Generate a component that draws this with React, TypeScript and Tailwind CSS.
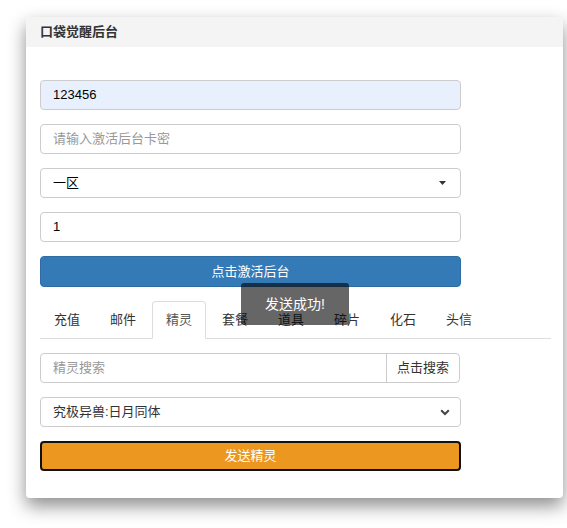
const tabs = ["充值", "邮件", "精灵", "套餐", "道具", "碎片", "化石", "头信"];

const field = "h-[30px] w-[421px] rounded-[4px] border border-[#ccc] px-[12px] flex items-center text-[13px]";

export default function App() {
  return (
    <div
      className="relative min-h-[528px] bg-white pt-[17px] pl-[26px] text-[#333]"
      style={{ fontFamily: '"Liberation Sans", "Noto Sans CJK SC", sans-serif' }}
    >
      <div className="w-[537px] overflow-hidden rounded-[4px] bg-white shadow-[0_8px_18px_rgba(0,0,0,0.45)]">
        {/* Header */}
        <div className="flex h-[30px] items-center bg-[#f4f4f4] px-[14px] text-[13px] font-bold text-[#333]">
          口袋觉醒后台
        </div>

        <div className="pl-[14px] pr-[12px] pt-[33px] pb-[27px]">
          {/* Activation form */}
          <div className="flex flex-col gap-[14px]">
            <div className={`${field} bg-[#e8f0fe] text-[#000]`}>123456</div>
            <div className={`${field} bg-white text-[#999]`}>请输入激活后台卡密</div>
            <div className={`${field} justify-between bg-white text-[#000]`}>
              <span>一区</span>
              <svg width="7" height="4" viewBox="0 0 7 4" className="mr-[2px]">
                <path d="M0 0h7L3.5 4z" fill="#333" />
              </svg>
            </div>
            <div className={`${field} bg-white text-[#000]`}>1</div>
            <div className="flex h-[31px] w-[421px] items-center justify-center rounded-[4px] border border-[#2e6da4] bg-[#337ab7] text-[13px] text-white">
              点击激活后台
            </div>
          </div>

          {/* Tabs */}
          <div className="mt-[14px] flex h-[38px] border-b border-[#ddd]">
            {tabs.map((t) => (
              <div
                key={t}
                className={
                  t === "精灵"
                    ? "-mb-px mr-[2px] flex w-[54px] items-center justify-center rounded-t-[4px] border border-[#ddd] border-b-white bg-white text-[13px] text-[#555]"
                    : "mr-[2px] flex w-[54px] items-center justify-center border border-transparent text-[13px] text-[#333]"
                }
              >
                {t}
              </div>
            ))}
          </div>

          {/* Search */}
          <div className="mt-[14px] flex h-[30px] w-[420px] rounded-[4px] border border-[#ccc] text-[13px]">
            <div className="flex flex-1 items-center px-[12px] text-[#999]">精灵搜索</div>
            <div className="flex w-[73px] items-center justify-center border-l border-[#ccc] text-[#333]">
              点击搜索
            </div>
          </div>

          <div className={`${field} mt-[14px] justify-between bg-white text-[#333]`}>
            <span>究极异兽:日月同体</span>
            <svg width="10" height="7" viewBox="0 0 10 7" className="mr-[-2px]">
              <path d="M1.2 1.3L5 5l3.8-3.7" stroke="#444" strokeWidth="2" fill="none" />
            </svg>
          </div>

          <div className="mt-[14px] flex h-[30px] w-[421px] items-center justify-center rounded-[4px] border-2 border-[#111] bg-[#ec971f] text-[13px] text-white">
            发送精灵
          </div>
        </div>
      </div>

      {/* Toast */}
      <div className="absolute left-[241px] top-[283px] flex h-[42px] w-[108px] items-center justify-center rounded-[3px] bg-[rgba(0,0,0,0.6)] text-[14px] text-white">
        发送成功!
      </div>
    </div>
  );
}
